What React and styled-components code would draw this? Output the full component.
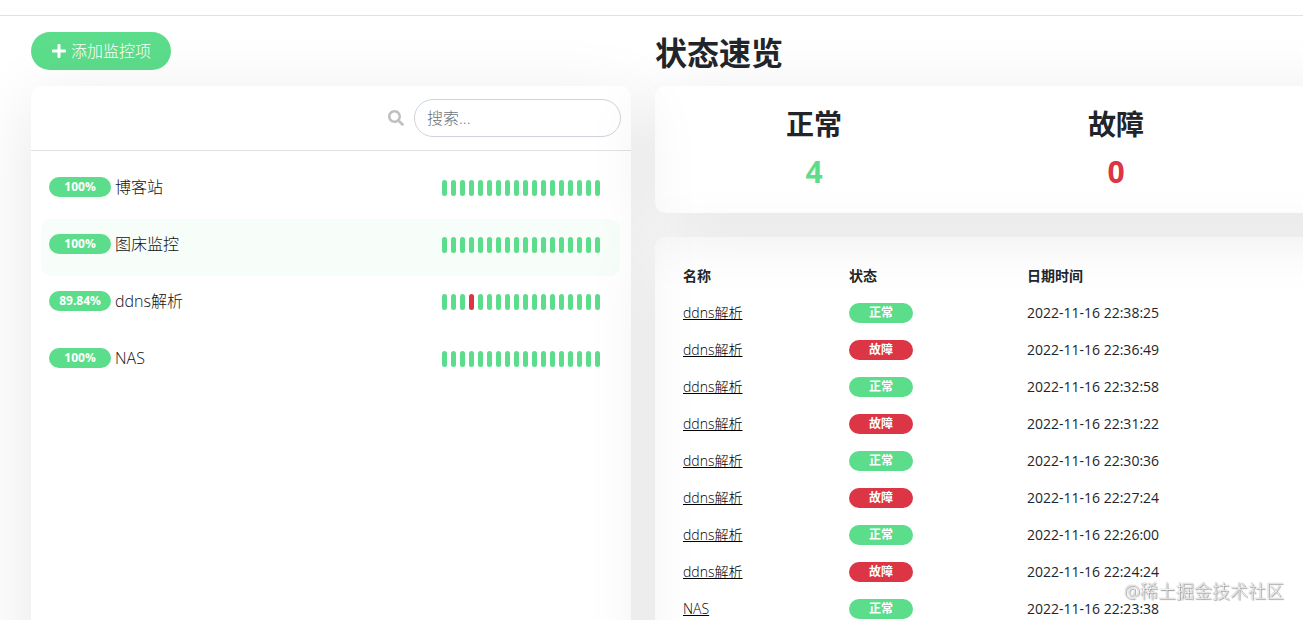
import React from "react";
import styled, { createGlobalStyle } from "styled-components";
import { FaPlus, FaSearch } from "react-icons/fa";

const green = "#5cdd8b";
const red = "#dc3545";

const GlobalStyle = createGlobalStyle`
  *, *::before, *::after { box-sizing: border-box; }
  body {
    margin: 0;
    background: #fff;
    color: #212529;
    font-family: "Open Sans", "Noto Sans CJK SC", sans-serif;
    font-size: 16px;
    line-height: 24px;
  }
  h1, h2, p, ul { margin: 0; padding: 0; }
  button, input { font: inherit; }
`;

const Page = styled.div`
  height: 100vh;
  overflow: hidden;
`;

const TopBar = styled.header`
  height: 16px;
  border-bottom: 1px solid #dee2e6;
`;

const Main = styled.main`
  display: grid;
  grid-template-columns: 25fr 27fr;
  gap: 24px;
  padding: 16px 0 0 31px;
`;

const Column = styled.div`
  min-width: 0;
`;

const ShadowBox = styled.section`
  border-radius: 10px;
  box-shadow: 0 15px 70px rgba(0, 0, 0, 0.1);
`;

const AddButton = styled.button`
  display: flex;
  align-items: center;
  justify-content: center;
  gap: 4px;
  width: 140px;
  height: 38px;
  margin-bottom: 16px;
  padding: 0;
  border: 0;
  border-radius: 19px;
  background: ${green};
  color: #fff;
  font-weight: 300;
`;

const MonitorBox = styled(ShadowBox)`
  min-height: 120vh;
`;

const SearchBar = styled.label`
  display: flex;
  align-items: center;
  justify-content: flex-end;
  gap: 10px;
  padding: 13px 10px;
  border-bottom: 1px solid #dee2e6;
  color: #c0c0c0;
`;

const SearchInput = styled.input`
  width: 207px;
  height: 38px;
  padding: 0 12px;
  border: 1px solid #ced4da;
  border-radius: 19px;
  background: #fff;
  color: #212529;
  font-weight: 300;
  &::placeholder { color: #6c757d; opacity: 1; }
`;

const MonitorList = styled.ul`
  padding: 11px 11px 11px 10px;
  list-style: none;
`;

const MonitorItem = styled.li`
  display: flex;
  align-items: center;
  gap: 4px;
  padding: 13px 20px 20px 8px;
  border-radius: 10px;
  background: ${(p) => (p.$active ? "rgba(92, 221, 115, 0.05)" : "transparent")};
  color: #111;
  font-weight: 300;
`;

const Badge = styled.span`
  display: block;
  width: ${(p) => p.$width}px;
  height: 20px;
  border-radius: 10px;
  background: ${(p) => (p.$down ? red : green)};
  color: #fff;
  font-size: 12px;
  font-weight: 700;
  line-height: 20px;
  text-align: center;
`;

const Beats = styled.div`
  display: flex;
  gap: 4px;
  margin-left: auto;
  padding-top: 2px;
`;

const Beat = styled.span`
  width: 5px;
  height: 16px;
  border-radius: 3px;
  background: ${(p) => (p.$down ? red : green)};
`;

const Title = styled.h1`
  margin-bottom: 12px;
  font-size: 32px;
  line-height: 42px;
  font-weight: 700;
`;

const WideColumn = styled(Column)`
  margin-right: -120px;
`;

const Stats = styled(ShadowBox)`
  display: flex;
  margin-bottom: 24px;
  padding: 21px 8px 19px;
`;

const Stat = styled.div`
  flex: 0 0 302px;
  text-align: center;
`;

const StatName = styled.h2`
  margin-bottom: 8px;
  font-size: 28px;
  line-height: 34px;
  font-weight: 700;
`;

const StatValue = styled.p`
  color: ${(p) => (p.$down ? red : green)};
  font-size: 30px;
  line-height: 45px;
  font-weight: 700;
`;

const EventBox = styled(ShadowBox)`
  min-height: 100vh;
  padding: 20px;
`;

const EventTable = styled.table`
  width: 100%;
  border-collapse: collapse;
  table-layout: fixed;
  font-size: 14px;
  line-height: 21px;
  th, td {
    height: 37px;
    padding: 0 8px;
    text-align: left;
    vertical-align: middle;
  }
`;

const HeadCell = styled.th`
  width: ${(p) => (p.$width ? `${p.$width}px` : "auto")};
`;

const NameLink = styled.a`
  color: #000;
  font-weight: 300;
  text-decoration: underline;
`;

const Watermark = styled.div`
  position: fixed;
  right: 19px;
  bottom: 17px;
  color: #f4f4f4;
  font-size: 18px;
  font-weight: 300;
  text-shadow: 0 0 1px #777, 1px 1px 1px #999;
`;

const monitors = [
  { name: "博客站", uptime: "100%" },
  { name: "图床监控", uptime: "100%", active: true },
  { name: "ddns解析", uptime: "89.84%", downAt: 3 },
  { name: "NAS", uptime: "100%" },
];

const events = [
  { name: "ddns解析", down: false, time: "2022-11-16 22:38:25" },
  { name: "ddns解析", down: true, time: "2022-11-16 22:36:49" },
  { name: "ddns解析", down: false, time: "2022-11-16 22:32:58" },
  { name: "ddns解析", down: true, time: "2022-11-16 22:31:22" },
  { name: "ddns解析", down: false, time: "2022-11-16 22:30:36" },
  { name: "ddns解析", down: true, time: "2022-11-16 22:27:24" },
  { name: "ddns解析", down: false, time: "2022-11-16 22:26:00" },
  { name: "ddns解析", down: true, time: "2022-11-16 22:24:24" },
  { name: "NAS", down: false, time: "2022-11-16 22:23:38" },
];

const beats = Array.from({ length: 18 }, (_, i) => i);

export default function App() {
  return (
    <Page>
      <GlobalStyle />
      <TopBar />
      <Main>
        <Column>
          <AddButton type="button">
            <FaPlus size={16} />
            添加监控项
          </AddButton>
          <MonitorBox>
            <SearchBar>
              <FaSearch size={16} />
              <SearchInput type="text" placeholder="搜索..." />
            </SearchBar>
            <MonitorList>
              {monitors.map((m) => (
                <MonitorItem key={m.name} $active={m.active}>
                  <Badge $width={62}>{m.uptime}</Badge>
                  <span>{m.name}</span>
                  <Beats>
                    {beats.map((i) => (
                      <Beat key={i} $down={i === m.downAt} />
                    ))}
                  </Beats>
                </MonitorItem>
              ))}
            </MonitorList>
          </MonitorBox>
        </Column>
        <WideColumn>
          <Title>状态速览</Title>
          <Stats>
            <Stat>
              <StatName>正常</StatName>
              <StatValue>4</StatValue>
            </Stat>
            <Stat>
              <StatName>故障</StatName>
              <StatValue $down>0</StatValue>
            </Stat>
          </Stats>
          <EventBox>
            <EventTable>
              <thead>
                <tr>
                  <HeadCell $width={166}>名称</HeadCell>
                  <HeadCell $width={178}>状态</HeadCell>
                  <HeadCell>日期时间</HeadCell>
                </tr>
              </thead>
              <tbody>
                {events.map((e) => (
                  <tr key={e.time}>
                    <td>
                      <NameLink href="#">{e.name}</NameLink>
                    </td>
                    <td>
                      <Badge $width={64} $down={e.down}>
                        {e.down ? "故障" : "正常"}
                      </Badge>
                    </td>
                    <td>{e.time}</td>
                  </tr>
                ))}
              </tbody>
            </EventTable>
          </EventBox>
        </WideColumn>
      </Main>
      <Watermark>@稀土掘金技术社区</Watermark>
    </Page>
  );
}
